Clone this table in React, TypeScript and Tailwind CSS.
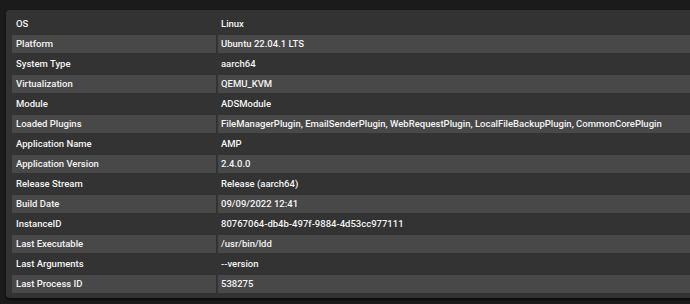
import React from "react";

const rows: [string, string][] = [
  ["OS", "Linux"],
  ["Platform", "Ubuntu 22.04.1 LTS"],
  ["System Type", "aarch64"],
  ["Virtualization", "QEMU_KVM"],
  ["Module", "ADSModule"],
  [
    "Loaded Plugins",
    "FileManagerPlugin, EmailSenderPlugin, WebRequestPlugin, LocalFileBackupPlugin, CommonCorePlugin",
  ],
  ["Application Name", "AMP"],
  ["Application Version", "2.4.0.0"],
  ["Release Stream", "Release (aarch64)"],
  ["Build Date", "09/09/2022 12:41"],
  ["InstanceID", "80767064-db4b-497f-9884-4d53cc977111"],
  ["Last Executable", "/usr/bin/ldd"],
  ["Last Arguments", "--version"],
  ["Last Process ID", "538275"],
];

const App: React.FC = () => {
  return (
    <div className="w-[690px] h-[304px] overflow-hidden bg-[#1b1b1b] pt-[10px] font-['Roboto',sans-serif]">
      <div className="ml-[6px] w-[700px] rounded-l-[4px] bg-[#333333] pl-[4px] pt-[3px] pb-[3px] shadow-[0_2px_3px_rgba(0,0,0,0.6)]">
        <table className="w-full table-fixed border-separate border-spacing-[2px] text-[9.5px] font-medium text-[#f4f4f4]">
          <colgroup>
            <col className="w-[204px]" />
            <col />
          </colgroup>
          <tbody>
            {rows.map(([label, value], i) => (
              <tr key={label} className={i % 2 === 1 ? "bg-[#484848]" : ""}>
                <td className="h-[18px] p-0 pl-[4px] leading-[18px] whitespace-nowrap">
                  {label}
                </td>
                <td className="h-[18px] p-0 pl-[3px] leading-[18px] whitespace-nowrap">
                  {value}
                </td>
              </tr>
            ))}
          </tbody>
        </table>
      </div>
    </div>
  );
};

export default App;
